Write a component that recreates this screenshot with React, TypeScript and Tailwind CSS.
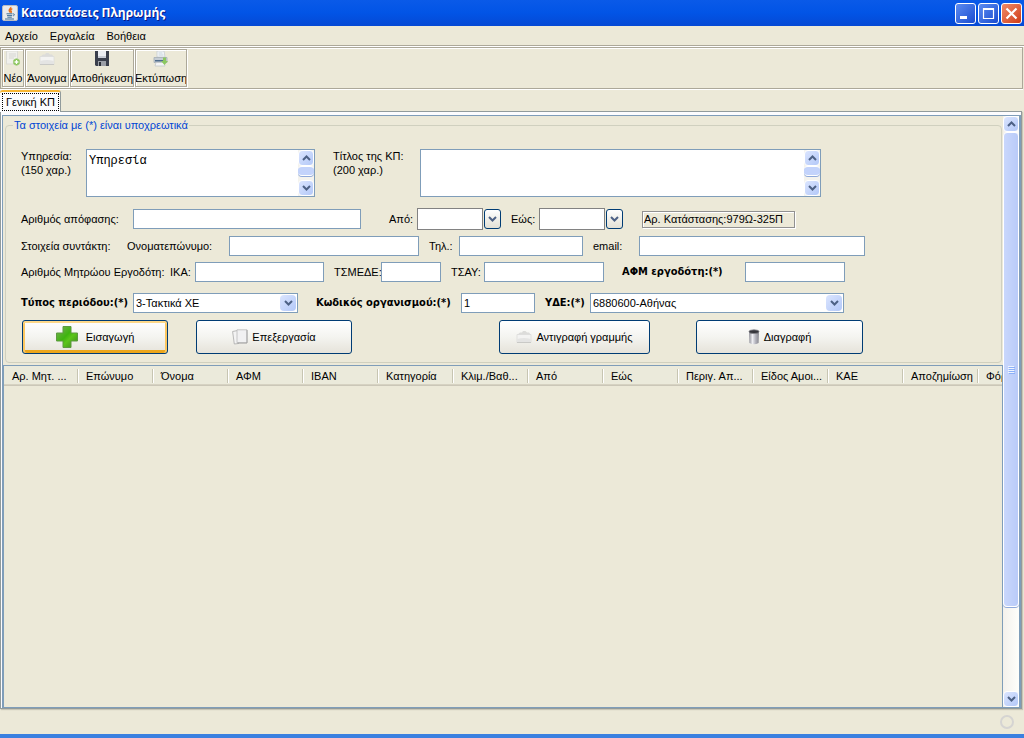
import React from "react";

const COLUMNS = [
  "Αρ. Μητ. ...",
  "Επώνυμο",
  "Όνομα",
  "ΑΦΜ",
  "ΙΒΑΝ",
  "Κατηγορία",
  "Κλιμ./Βαθ...",
  "Από",
  "Εώς",
  "Περιγ. Απ...",
  "Είδος Αμοι...",
  "ΚΑΕ",
  "Αποζημίωση",
  "Φόρος",
];

const JavaIcon = () => (
  <svg width="16" height="16" viewBox="0 0 16 16">
    <rect x="0.5" y="0.5" width="15" height="15" rx="1.5" fill="#e9eaec" stroke="#b9bcc2" />
    <path d="M8.6 2c1 1.3-2.6 2.4-1.2 4.2.4.6.8.9.8 1.5M10.3 3.6c-1.8.8-1.9 1.7-1.2 2.6.5.6.2 1.2-.3 1.6" fill="none" stroke="#e8701a" strokeWidth="1.4" />
    <path d="M4.5 8.8h6M5 10.6h5.2M5.4 12.2h4.4M3 14h9M11 9c1.6-.4 2 1 .2 2" fill="none" stroke="#3f6f96" strokeWidth="1" />
  </svg>
);

const NewIcon = () => (
  <svg width="16" height="16" viewBox="0 0 16 16">
    <rect x="1.5" y="0" width="11" height="13" fill="#f0f0ec" stroke="#dbdbd6" strokeWidth="1" />
    <path d="M4 3h7M4 5h7M4 7h5" stroke="#d6d6d2" />
    <circle cx="11.5" cy="11" r="3.2" fill="#7fc24a" stroke="#a8cf86" />
    <path d="M9.5 11h4M11.5 9v4" stroke="#fff" strokeWidth="1.4" />
  </svg>
);

const FolderIcon = () => (
  <svg width="16" height="16" viewBox="0 0 16 16">
    <path d="M1 6l3-2.500h2L7 2h2.500L11 3.500h2L15 6z" fill="#dcdcda" />
    <path d="M1 5.500h14v8H1z" fill="#f3f3f2" stroke="#dcdcda" strokeWidth=".8" />
    <path d="M1.200 10q6.800-2 13.600 0v3.200H1.200z" fill="#e4e4e3" />
    <path d="M1 13.500h14" stroke="#c9c9c6" />
  </svg>
);

const SaveIcon = () => (
  <svg width="16" height="16" viewBox="0 0 16 16">
    <path d="M1 0h14v15H2l-1-1z" fill="#3a3f4c" />
    <path d="M4 0h8v7H4z" fill="#eceef2" />
    <path d="M4 5h8v2H4z" fill="#c9cdd6" />
    <path d="M4 10h8v5H4z" fill="#9ca0a8" />
    <path d="M5 11h2v4H5z" fill="#2b2f38" />
  </svg>
);

const PrintIcon = () => (
  <svg width="16" height="16" viewBox="0 0 16 16">
    <path d="M4 0h7l1 6H4z" fill="#f6f7f8" stroke="#c5cbd0" strokeWidth=".8" />
    <path d="M5.5 2h4M5.5 4h5" stroke="#c3d2dc" />
    <path d="M1 6.5h13v5H1z" fill="#c4ccd4" stroke="#a5adb6" strokeWidth=".8" />
    <path d="M2 9h8v1.5H2z" fill="#4e6c8c" />
    <path d="M3 11.5h8l1 3.5H2z" fill="#f4f5f6" stroke="#c2c6ca" strokeWidth=".8" />
    <path d="M10 6.500h3v3.500h2l-3.500 4L8 10h2z" fill="#8cc860" />
  </svg>
);

const PlusIcon = () => (
  <svg width="22" height="22" viewBox="0 0 22 22">
    <defs>
      <linearGradient id="plus" x1="0" y1="0" x2="1" y2="1">
        <stop offset="0" stopColor="#7fae5c" />
        <stop offset=".45" stopColor="#3fb40f" />
        <stop offset=".6" stopColor="#5cc51a" />
        <stop offset="1" stopColor="#3a8420" />
      </linearGradient>
    </defs>
    <path d="M7 .5h8V7h6.500v8H15v6.500H7V15H.5V7H7z" fill="url(#plus)" stroke="#5d9a40" />
  </svg>
);

const PagesIcon = () => (
  <svg width="16" height="16" viewBox="0 0 16 16">
    <path d="M.6 2.500l5-1 1 13-4.300.5z" fill="#f3f3f3" stroke="#a9a9a9" strokeWidth=".8" />
    <path d="M5 .8h10v13H5z" fill="#f1f1f2" stroke="#b9b9b9" strokeWidth=".8" />
    <path d="M15 1v13H5.500" fill="none" stroke="#999" strokeWidth=".8" />
  </svg>
);

const TrashIcon = () => (
  <svg width="12" height="16" viewBox="0 0 12 16">
    <defs>
      <linearGradient id="can">
        <stop offset="0" stopColor="#8d8d96" />
        <stop offset=".35" stopColor="#eeeef2" />
        <stop offset=".65" stopColor="#b5b5be" />
        <stop offset="1" stopColor="#85858d" />
      </linearGradient>
    </defs>
    <path d="M1 2.500h10l-.4 11.500q-4.600 2.400-9.200 0z" fill="url(#can)" />
    <ellipse cx="6" cy="2.700" rx="5" ry="1.900" fill="#35353b" stroke="#85858c" strokeWidth=".8" />
  </svg>
);

const Chevron = ({ up }: { up?: boolean }) => (
  <svg width="9" height="6" viewBox="0 0 9 6">
    <path d={up ? "M1 5l3.500-3.500L8 5" : "M1 1l3.500 3.500L8 1"} fill="none" stroke="#4d6185" strokeWidth="2" />
  </svg>
);

const ScrollButton = ({ up }: { up?: boolean }) => (
  <button
    type="button"
    aria-label={up ? "Πάνω" : "Κάτω"}
    className="flex h-4 w-4 shrink-0 items-center justify-center rounded-sm border border-white bg-linear-to-br from-[#dbe5fe] to-[#b3c8f8]"
  >
    <Chevron up={up} />
  </button>
);

interface TextBoxProps {
  id: string;
  label: string;
  hint: string;
  labelClass: string;
  boxClass: string;
  value?: string;
}

const TextBox: React.FC<TextBoxProps> = ({ id, label, hint, labelClass, boxClass, value = "" }) => (
  <>
    <label htmlFor={id} className={`shrink-0 ${labelClass}`}>
      {label}
      <br />
      {hint}
    </label>
    <div className={`flex h-12 shrink-0 border border-[#7f9db9] bg-white ${boxClass}`}>
      <textarea
        id={id}
        defaultValue={value}
        className="min-w-0 flex-1 resize-none overflow-hidden px-[2px] py-1 font-['Liberation_Mono',monospace] text-xs leading-[14px] outline-none"
      />
      <div className="flex w-4 flex-col bg-[#f4f3ee]">
        <ScrollButton up />
        <div className="h-[10px] rounded-sm border-y border-white bg-[#c3d3fb] shadow-[0_1px_0_#8fa9da]" />
        <div className="flex-1" />
        <ScrollButton />
      </div>
    </div>
  </>
);

interface FieldProps {
  id: string;
  label: string;
  labelClass: string;
  inputClass: string;
  bold?: boolean;
  value?: string;
}

const boldFont = "font-['DejaVu_Sans_Condensed','DejaVu_Sans',sans-serif] font-bold";

const Field: React.FC<FieldProps> = ({ id, label, labelClass, inputClass, bold, value = "" }) => (
  <>
    <label htmlFor={id} className={`shrink-0 whitespace-nowrap ${bold ? boldFont : ""} ${labelClass}`}>
      {label}
    </label>
    <input
      id={id}
      type="text"
      defaultValue={value}
      className={`h-5 shrink-0 border border-[#7f9db9] bg-white px-[2px] outline-none ${inputClass}`}
    />
  </>
);

const DateField: React.FC<FieldProps> = ({ id, label, labelClass, inputClass }) => (
  <>
    <label htmlFor={id} className={`shrink-0 ${labelClass}`}>
      {label}
    </label>
    <input id={id} type="text" className={`h-[22px] shrink-0 border border-[#828282] bg-white px-[2px] outline-none ${inputClass}`} />
    <button
      type="button"
      aria-label={label}
      className="ml-px flex h-5 w-[17px] shrink-0 items-center justify-center rounded-[3px] border border-[#003c74] bg-linear-to-b from-white to-[#e3e1d6]"
    >
      <Chevron />
    </button>
  </>
);

const SelectField: React.FC<FieldProps> = ({ id, label, labelClass, inputClass, value = "" }) => (
  <>
    <label htmlFor={id} className={`shrink-0 whitespace-nowrap ${boldFont} ${labelClass}`}>
      {label}
    </label>
    <div className={`relative h-5 shrink-0 border border-[#7f9db9] bg-white ${inputClass}`}>
      <select id={id} className="h-full w-full appearance-none bg-transparent px-[2px] outline-none">
        <option>{value}</option>
      </select>
      <span className="pointer-events-none absolute inset-y-px right-px flex w-4 items-center justify-center rounded-sm bg-linear-to-br from-[#dbe5fe] to-[#b3c8f8]">
        <Chevron />
      </span>
    </div>
  </>
);

interface ActionButtonProps {
  icon: React.ReactNode;
  label: string;
  className: string;
  active?: boolean;
}

const ActionButton: React.FC<ActionButtonProps> = ({ icon, label, className, active }) => (
  <button
    type="button"
    className={`flex shrink-0 items-center justify-center rounded-[3px] border border-[#003c74] bg-linear-to-b from-white via-[#f4f4f0] to-[#e6e3da] ${
      active ? "gap-2 shadow-[inset_0_2px_0_#fdd889,inset_2px_0_0_#fbc761,inset_-2px_0_0_#fbc761,inset_0_-3px_0_#eca61c]" : "gap-1"
    } ${className}`}
  >
    {icon}
    {label}
  </button>
);

const ToolButton = ({ icon, label, className }: { icon: React.ReactNode; label: string; className: string }) => (
  <button
    type="button"
    className={`flex h-[38px] flex-col items-center justify-between overflow-hidden border border-[#aca899] pt-px pb-px whitespace-nowrap shadow-[inset_1px_1px_0_#fff,1px_1px_0_#fff] ${className}`}
  >
    {icon}
    <span>{label}</span>
  </button>
);

const winButton = "flex h-[21px] w-[21px] items-center justify-center rounded-[3px] border border-white";

const App: React.FC = () => {
  return (
    <div className="flex h-screen flex-col overflow-hidden bg-[#ece9d8] font-['Liberation_Sans',sans-serif] text-[11px] leading-[14px] text-black">
      <header className="flex h-[26px] shrink-0 items-center bg-linear-to-b from-[#0a5ae8] via-[#0254e6] to-[#0549d4] pr-[2px] pl-[2px]">
        <JavaIcon />
        <h1 className="ml-[3px] flex-1 font-['Open_Sans',sans-serif] text-[12px] leading-[18px] font-bold text-white [text-shadow:1px_1px_0_#0a1883]">
          Καταστάσεις Πληρωμής
        </h1>
        <div className="flex gap-[2px]">
          <button type="button" aria-label="Ελαχιστοποίηση" className={`${winButton} bg-linear-to-br from-[#5c8bf0] to-[#1a4bd0]`}>
            <svg width="13" height="13" viewBox="0 0 13 13">
              <path d="M1 9h7v3H1z" fill="#fff" />
            </svg>
          </button>
          <button type="button" aria-label="Μεγιστοποίηση" className={`${winButton} bg-linear-to-br from-[#5c8bf0] to-[#1a4bd0]`}>
            <svg width="13" height="13" viewBox="0 0 13 13">
              <path d="M1.500 1.500h10v10h-10zM1 2.500h11" fill="none" stroke="#fff" strokeWidth="1.200" />
            </svg>
          </button>
          <button type="button" aria-label="Κλείσιμο" className={`${winButton} bg-linear-to-br from-[#f08a68] to-[#cf3a10]`}>
            <svg width="13" height="13" viewBox="0 0 13 13">
              <path d="M1.500 1.500l10 10M11.500 1.500l-10 10" stroke="#fff" strokeWidth="2.200" />
            </svg>
          </button>
        </div>
      </header>

      <nav className="flex h-5 shrink-0 items-center gap-3 border-b border-[#aca899] pl-[5px] shadow-[0_1px_0_#fff]">
        <button type="button">Αρχείο</button>
        <button type="button">Εργαλεία</button>
        <button type="button">Βοήθεια</button>
      </nav>

      <div className="mt-px mr-px flex h-[42px] shrink-0 items-center gap-px border border-[#aca899] pl-px shadow-[inset_0_1px_0_#fff,0_1px_0_#fff]">
        <ToolButton className="w-[22px]" icon={<NewIcon />} label="Νέο" />
        <ToolButton className="w-11" icon={<FolderIcon />} label="Άνοιγμα" />
        <ToolButton className="w-16" icon={<SaveIcon />} label="Αποθήκευση" />
        <ToolButton className="w-[52px]" icon={<PrintIcon />} label="Εκτύπωση" />
      </div>

      <div className="z-10 mt-px -mb-px flex shrink-0" role="tablist">
        <button
          type="button"
          role="tab"
          aria-selected="true"
          className="h-[22px] w-[61px] rounded-t-[3px] border-t-2 border-r border-t-[#f8b634] border-r-[#919b9c] bg-[#fcfcfe] pr-px pl-[2px]"
        >
          <span className="flex h-[18px] items-center justify-center border border-dotted border-black whitespace-nowrap">Γενική ΚΠ</span>
        </button>
      </div>

      <main className="mr-[2px] flex min-h-0 flex-1 flex-col border border-[#919b9c] bg-[#fcfcfe] pt-[3px] pl-px shadow-[1px_1px_1px_#c9c6b6]">
        <div className="flex min-h-0 flex-1 border border-r-2 border-[#7f9db9] bg-[#ece9d8]">
          <div className="flex min-w-0 flex-1 flex-col">
            <fieldset className="mt-[2px] mr-px ml-[2px] min-w-0 rounded border border-[#d0d0bf] pb-2 pl-[15px]">
              <legend className="-ml-2 px-px text-[#0046d5]">Τα στοιχεία με (*) είναι υποχρεωτικά</legend>

              <div className="mt-[17px] flex">
                <TextBox id="service" label="Υπηρεσία:" hint="(150 χαρ.)" labelClass="w-[65px]" boxClass="w-[229px]" value="Υπηρεσία" />
                <TextBox id="title" label="Τίτλος της ΚΠ:" hint="(200 χαρ.)" labelClass="ml-[18px] w-[87px]" boxClass="w-[401px]" />
              </div>

              <div className="mt-[11px] flex h-[22px] items-center">
                <Field id="decision" label="Αριθμός απόφασης:" labelClass="w-28" inputClass="w-[228px]" />
                <DateField id="from" label="Από:" labelClass="ml-7 w-7" inputClass="w-[66px]" />
                <DateField id="to" label="Εώς:" labelClass="ml-[10px] w-7" inputClass="w-[66px]" />
                <output className="ml-[19px] h-[17px] w-[153px] shrink-0 border border-[#919191] pl-px leading-[15px] shadow-[1px_1px_0_#fff,inset_1px_1px_0_#fff]">
                  Αρ. Κατάστασης:979Ω-325Π
                </output>
              </div>

              <div className="mt-[6px] flex items-center">
                <span className="w-[106px] shrink-0">Στοιχεία συντάκτη:</span>
                <Field id="fullname" label="Ονοματεπώνυμο:" labelClass="w-[102px]" inputClass="w-[190px]" />
                <Field id="phone" label="Τηλ.:" labelClass="ml-[10px] w-[30px]" inputClass="w-[124px]" />
                <Field id="email" label="email:" labelClass="ml-[10px] w-[46px]" inputClass="w-[226px]" />
              </div>

              <div className="mt-[6px] flex items-center">
                <span className="w-[149px] shrink-0 whitespace-nowrap">Αριθμός Μητρώου Εργοδότη:</span>
                <Field id="ika" label="ΙΚΑ:" labelClass="w-[25px]" inputClass="w-[129px]" />
                <Field id="tsmede" label="ΤΣΜΕΔΕ:" labelClass="ml-[10px] w-[47px]" inputClass="w-[60px]" />
                <Field id="tsay" label="ΤΣΑΥ:" labelClass="ml-[10px] w-[33px]" inputClass="w-[120px]" />
                <Field id="afm" label="ΑΦΜ εργοδότη:(*)" bold labelClass="ml-[18px] w-[123px]" inputClass="w-[100px]" />
              </div>

              <div className="mt-[11px] flex items-center">
                <SelectField id="period" label="Τύπος περιόδου:(*)" labelClass="w-28" inputClass="w-[165px]" value="3-Τακτικά ΧΕ" />
                <Field id="org" label="Κωδικός οργανισμού:(*)" bold labelClass="ml-[18px] w-[145px]" inputClass="w-[74px]" value="1" />
                <SelectField id="yde" label="ΥΔΕ:(*)" labelClass="ml-[10px] w-[45px]" inputClass="w-[254px]" value="6880600-Αθήνας" />
              </div>

              <div className="mt-[7px] flex items-start">
                <ActionButton className="ml-px h-[34px] w-[146px]" icon={<PlusIcon />} label="Εισαγωγή" active />
                <ActionButton className="ml-7 h-[34px] w-[156px]" icon={<PagesIcon />} label="Επεξεργασία" />
                <ActionButton className="ml-[147px] h-[34px] w-[151px]" icon={<FolderIcon />} label="Αντιγραφή γραμμής" />
                <ActionButton className="ml-[46px] h-[34px] w-[167px]" icon={<TrashIcon />} label="Διαγραφή" />
              </div>
            </fieldset>

            <div className="mt-[2px] min-h-0 flex-1 overflow-hidden border-t border-r border-l border-[#7f9db9]">
              <table className="w-[1049px] table-fixed border-collapse">
                <thead>
                  <tr className="h-5 bg-[#ebeadb] shadow-[inset_0_-1px_0_#cbc7b8,inset_0_-2px_0_#d6d2c2]">
                    {COLUMNS.map(col => (
                      <th key={col} className="w-[75px] p-0 text-left font-normal whitespace-nowrap first:w-[74px]">
                        <div className="h-[14px] border-r border-[#c7c5b2] pl-[8px] shadow-[1px_0_0_#fff]">{col}</div>
                      </th>
                    ))}
                  </tr>
                </thead>
              </table>
            </div>
          </div>

          <div className="flex w-4 shrink-0 flex-col bg-linear-to-r from-[#f3f1ec] to-[#fefefb]">
            <ScrollButton up />
            <div className="min-h-0 flex-1">
              <div className="flex h-[85%] items-center justify-center rounded-sm border border-white bg-linear-to-r from-[#c9d7fc] to-[#b9cbf8] shadow-[0_1px_0_#8fa9da]">
                <svg width="7" height="8" viewBox="0 0 7 8">
                  <path d="M0 .5h6M0 2.500h6M0 4.500h6M0 6.500h6" stroke="#eef4fe" />
                  <path d="M1 1.500h6M1 3.500h6M1 5.500h6M1 7.500h6" stroke="#8cb0f8" />
                </svg>
              </div>
            </div>
            <ScrollButton />
          </div>
        </div>
      </main>

      <footer className="flex h-[25px] shrink-0 items-center justify-end pr-[9px]">
        <svg width="16" height="16" viewBox="0 0 16 16">
          <circle cx="8" cy="8" r="6" fill="none" stroke="#d5d4d2" strokeWidth="2" />
        </svg>
      </footer>
      <div className="h-1 shrink-0 bg-[#3a80e0]" />
    </div>
  );
};

export default App;
